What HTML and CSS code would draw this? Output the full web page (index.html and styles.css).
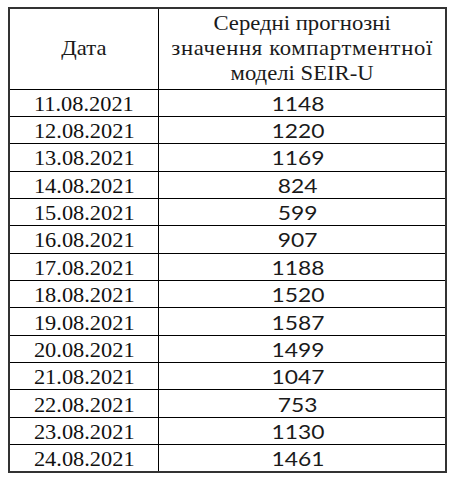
FILE: index.html
```html
<!DOCTYPE html>
<html lang="uk">
<head>
<meta charset="utf-8">
<link rel="stylesheet" href="styles.css">
</head>
<body>
<table class="tbl">
  <thead>
    <tr class="hrow">
      <th class="c-date"><span class="sx-h">Дата</span></th>
      <th class="c-val"><div class="sx-h">Середні прогнозні<br><span class="wide">значення компартментної</span><br>моделі SEIR-U</div></th>
    </tr>
  </thead>
  <tbody>
    <tr><td class="d"><span class="sx-d">11.08.2021</span></td><td class="v"><span class="sx-v">1148</span></td></tr>
    <tr><td class="d"><span class="sx-d">12.08.2021</span></td><td class="v"><span class="sx-v">1220</span></td></tr>
    <tr><td class="d"><span class="sx-d">13.08.2021</span></td><td class="v"><span class="sx-v">1169</span></td></tr>
    <tr><td class="d"><span class="sx-d">14.08.2021</span></td><td class="v"><span class="sx-v">824</span></td></tr>
    <tr><td class="d"><span class="sx-d">15.08.2021</span></td><td class="v"><span class="sx-v">599</span></td></tr>
    <tr><td class="d"><span class="sx-d">16.08.2021</span></td><td class="v"><span class="sx-v">907</span></td></tr>
    <tr><td class="d"><span class="sx-d">17.08.2021</span></td><td class="v"><span class="sx-v">1188</span></td></tr>
    <tr><td class="d"><span class="sx-d">18.08.2021</span></td><td class="v"><span class="sx-v">1520</span></td></tr>
    <tr><td class="d"><span class="sx-d">19.08.2021</span></td><td class="v"><span class="sx-v">1587</span></td></tr>
    <tr><td class="d"><span class="sx-d">20.08.2021</span></td><td class="v"><span class="sx-v">1499</span></td></tr>
    <tr><td class="d"><span class="sx-d">21.08.2021</span></td><td class="v"><span class="sx-v">1047</span></td></tr>
    <tr><td class="d"><span class="sx-d">22.08.2021</span></td><td class="v"><span class="sx-v">753</span></td></tr>
    <tr><td class="d"><span class="sx-d">23.08.2021</span></td><td class="v"><span class="sx-v">1130</span></td></tr>
    <tr><td class="d"><span class="sx-d">24.08.2021</span></td><td class="v"><span class="sx-v">1461</span></td></tr>
  </tbody>
</table>
</body>
</html>
```
FILE: styles.css
```css
html, body {
  margin: 0;
  padding: 0;
  background: #fff;
}
body {
  padding: 7px 0 0 8px;
}
.tbl {
  border-collapse: collapse;
  width: 439px;
  table-layout: fixed;
  color: #111;
  border: 2px solid #333;
}
.tbl th, .tbl td {
  border: 1px solid #000;
  padding: 0;
  text-align: center;
  vertical-align: middle;
}
.c-date {
  width: 148px;
}
.hrow {
  height: 81px;
}
.tbl tbody tr {
  height: 27.36px;
}
.tbl th {
  font-family: "Liberation Serif", "Times New Roman", serif;
  font-weight: normal;
  font-size: 21px;
  line-height: 25px;
  color: #1a1a1a;
}
.wide {
  letter-spacing: 0.6px;
}
.tbl td {
  line-height: 24px;
  padding-top: 2px;
}
.d {
  font-family: "Liberation Serif", "Times New Roman", serif;
  font-size: 21px;
}
.v {
  font-family: "Lato", "Liberation Sans", sans-serif;
  font-size: 19px;
  color: #1a1a1a;
}
.sx-h {
  display: inline-block;
  transform: scaleX(1.08);
}
.sx-d {
  display: inline-block;
  transform: scaleX(1.065);
}
.sx-v {
  display: inline-block;
  transform: scaleX(1.2);
}
.v .sx-v {
  margin-right: 8px;
}
```
